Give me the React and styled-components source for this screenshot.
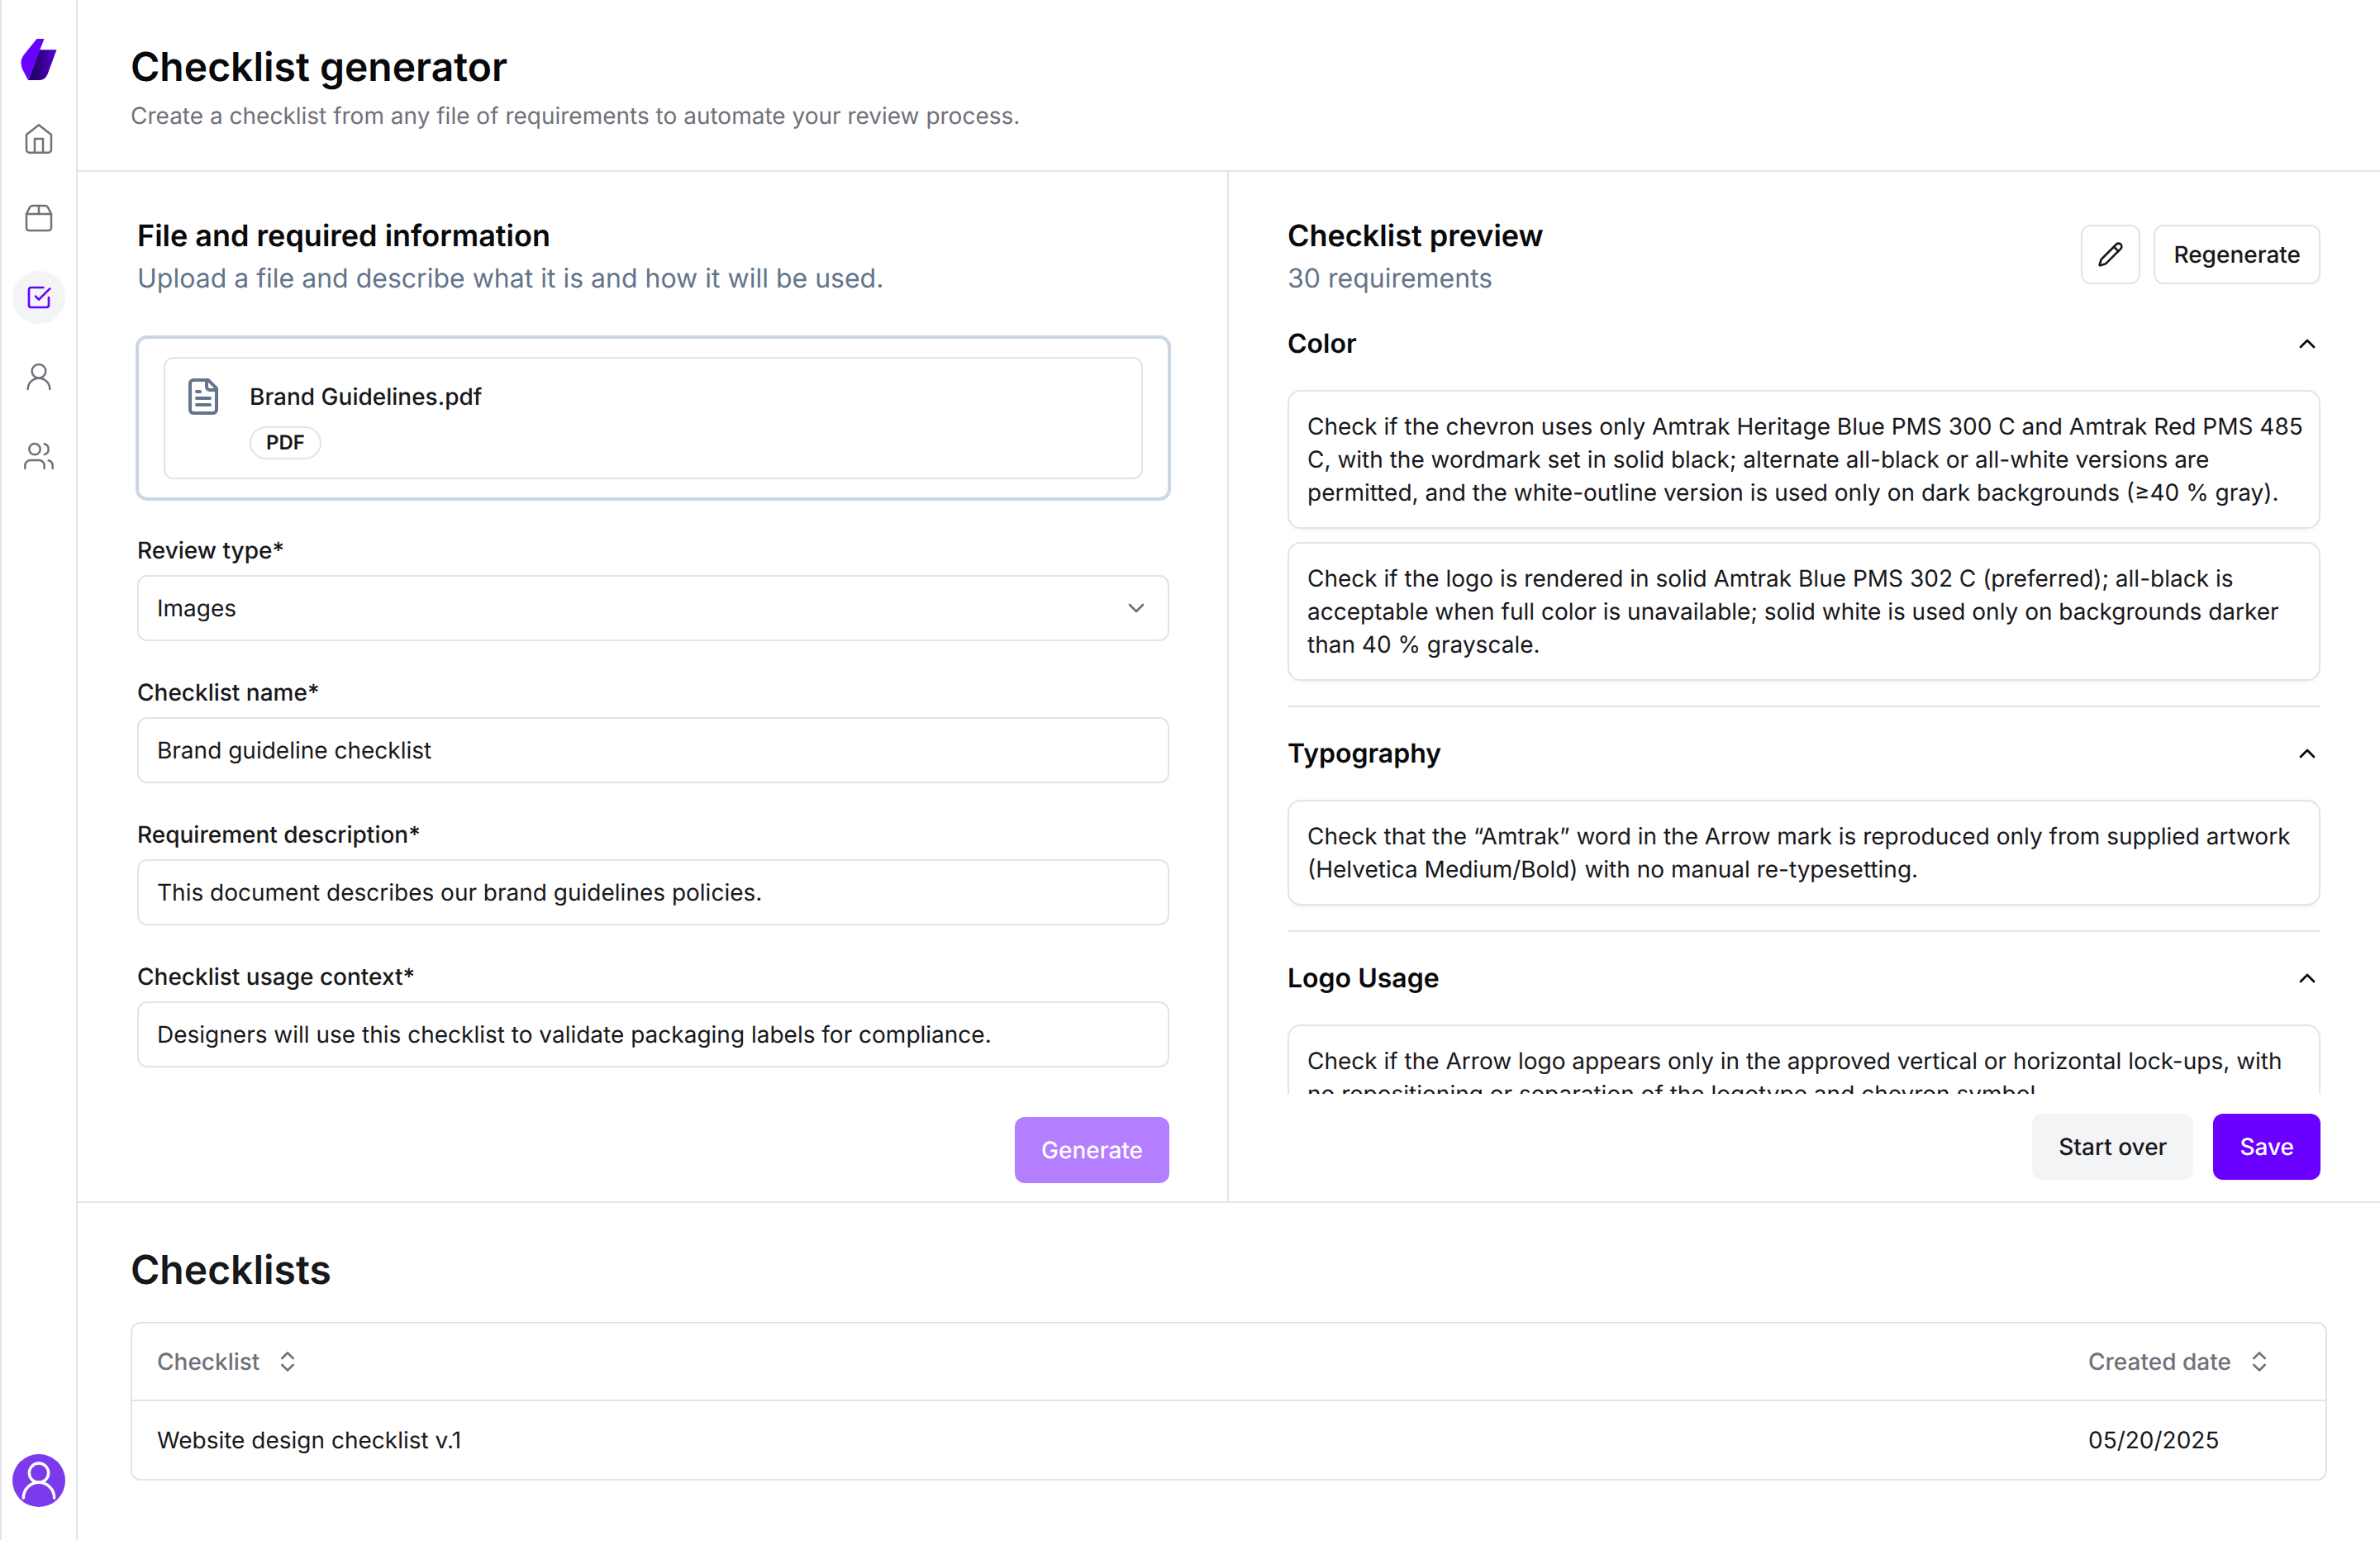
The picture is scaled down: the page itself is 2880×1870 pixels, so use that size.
import React, { useState } from 'react';
import styled, { createGlobalStyle, css } from 'styled-components';

const GlobalStyle = createGlobalStyle`
  *, *::before, *::after {
    box-sizing: border-box;
  }

  body {
    margin: 0;
    background: #ffffff;
    color: #18181b;
    font-family: Inter, 'Liberation Sans', sans-serif;
    font-size: 28px;
    line-height: 40px;
    text-rendering: geometricPrecision;
    -webkit-font-smoothing: antialiased;
  }

  button, input, select {
    font: inherit;
    color: inherit;
    text-rendering: inherit;
  }

  h1, h2, h3, p {
    margin: 0;
  }
`;

const Layout = styled.div`
  display: flex;
  min-height: calc(100vh - 6px);
`;

const Sidebar = styled.nav`
  flex: none;
  width: 94px;
  padding: 40px 0;
  display: flex;
  flex-direction: column;
  align-items: center;
  gap: 32px;
  border-left: 2px solid #e4e4e7;
  border-right: 2px solid #e4e4e7;
`;

const SidebarLink = styled.a`
  width: 64px;
  height: 64px;
  display: flex;
  align-items: center;
  justify-content: center;
  border-radius: 50%;
  color: ${({ $active }) => ($active ? '#6a00ff' : '#71717a')};
  background: ${({ $active }) => ($active ? '#f3f4f6' : 'transparent')};
`;

const Avatar = styled.button`
  width: 64px;
  height: 64px;
  margin-top: auto;
  padding: 0;
  display: flex;
  align-items: center;
  justify-content: center;
  border: none;
  border-radius: 50%;
  background: #7c3aed;
  color: #ffffff;
  cursor: pointer;
`;

const Main = styled.main`
  flex: 1;
  min-width: 0;
`;

const PageHeader = styled.header`
  padding: 48px 64px 46px;
  display: flex;
  flex-direction: column;
  gap: 6px;
  border-bottom: 2px solid #e4e4e7;
`;

const PageTitle = styled.h1`
  font-size: 48px;
  line-height: 66px;
  font-weight: 600;
  color: #09090b;
`;

const PageSubtitle = styled.p`
  color: #71717a;
`;

const Panes = styled.div`
  display: grid;
  grid-template-columns: 1fr 1fr;
  border-bottom: 2px solid #e4e4e7;
`;

const FormPane = styled.form`
  min-width: 0;
  padding: 49px 70px 22px 72px;
  border-right: 2px solid #e4e4e7;
`;

const PreviewPane = styled.section`
  min-width: 0;
  padding: 49px 72px 26px 71px;
  display: flex;
  flex-direction: column;
`;

const PaneHeader = styled.div`
  height: 103px;
  display: flex;
  align-items: flex-start;
  justify-content: space-between;
`;

const PaneTitle = styled.h2`
  font-size: 36px;
  line-height: 56px;
  font-weight: 600;
  color: #09090b;
`;

const PaneSubtitle = styled.p`
  font-size: 32px;
  line-height: 48px;
  color: #64748b;
`;

const DropZone = styled.div`
  margin: 47px 0 40px;
  padding: 22px 30px;
  border: 2px solid #cbd5e1;
  border-radius: 12px;
  box-shadow: 0 0 0 2px #cbd5e1;
`;

const FileCard = styled.div`
  padding: 22px;
  display: flex;
  gap: 32px;
  border: 2px solid #e4e4e7;
  border-radius: 12px;

  > svg {
    color: #64748b;
  }
`;

const FileInfo = styled.div`
  display: flex;
  flex-direction: column;
  align-items: flex-start;
  gap: 12px;
`;

const FileName = styled.span`
  line-height: 48px;
  font-weight: 500;
`;

const Badge = styled.span`
  padding: 0 18px;
  border: 2px solid #e4e4e7;
  border-radius: 20px;
  font-size: 24px;
  line-height: 36px;
  font-weight: 600;
`;

const Fields = styled.div`
  display: flex;
  flex-direction: column;
  gap: 40px;
`;

const Field = styled.div`
  display: flex;
  flex-direction: column;
  gap: 8px;
`;

const Label = styled.label`
  line-height: 44px;
  font-weight: 500;
`;

const control = css`
  width: 100%;
  height: 80px;
  padding: 0 22px;
  border: 2px solid #e4e4e7;
  border-radius: 12px;
  background: #ffffff;
  outline-color: #6a00ff;
`;

const Input = styled.input`
  ${control}
`;

const SelectWrapper = styled.div`
  position: relative;

  svg {
    position: absolute;
    top: 24px;
    right: 24px;
    color: #71717a;
    pointer-events: none;
  }
`;

const Select = styled.select`
  ${control}
  appearance: none;
`;

const Actions = styled.div`
  margin-top: ${({ $top }) => $top}px;
  display: flex;
  justify-content: flex-end;
  gap: 24px;
`;

const variants = {
  primary: css`
    background: #6a00ff;
    color: #ffffff;
  `,
  secondary: css`
    background: #f3f4f6;
  `,
};

const Button = styled.button`
  height: 80px;
  padding: 0 32px;
  border: none;
  border-radius: 12px;
  font-weight: 500;
  cursor: pointer;
  ${({ $variant }) => variants[$variant]}

  &:disabled {
    opacity: 0.5;
    cursor: default;
  }
`;

const Toolbar = styled.div`
  padding-top: 15px;
  display: flex;
  gap: 16px;
`;

const OutlineButton = styled.button`
  height: 72px;
  padding: 0 ${({ $icon }) => ($icon ? 18 : 22)}px;
  display: flex;
  align-items: center;
  border: 2px solid #e4e4e7;
  border-radius: 12px;
  background: #ffffff;
  font-weight: 500;
  cursor: pointer;
`;

const ScrollArea = styled.div`
  flex: 1 1 0px;
  min-height: 0;
  overflow-y: auto;
  scrollbar-width: none;
`;

const Group = styled.section`
  padding-bottom: 30px;
  border-bottom: 2px solid #e4e4e7;
`;

const GroupTrigger = styled.button`
  width: 100%;
  height: 112px;
  padding: 0;
  display: flex;
  align-items: center;
  justify-content: space-between;
  border: none;
  background: none;
  font-size: 32px;
  font-weight: 600;
  color: #09090b;
  cursor: pointer;
`;

const RequirementList = styled.div`
  display: flex;
  flex-direction: column;
  gap: 16px;
`;

const Requirement = styled.p`
  padding: 22px 16px 22px 22px;
  border: 2px solid #e4e4e7;
  border-radius: 16px;
  box-shadow: 0 2px 4px rgba(0, 0, 0, 0.05);
`;

const ChecklistsSection = styled.section`
  padding: 48px 64px 72px;
`;

const SectionTitle = styled.h2`
  margin-bottom: 30px;
  font-size: 48px;
  line-height: 66px;
  font-weight: 600;
`;

const TableFrame = styled.div`
  border: 2px solid #e4e4e7;
  border-radius: 12px;
`;

const Table = styled.table`
  width: 100%;
  border-collapse: separate;
  border-spacing: 0;
  text-align: left;

  th, td {
    height: 94px;
    padding: 0 30px;
  }

  th {
    border-bottom: 2px solid #e4e4e7;
  }

  th:last-child {
    width: 317px;
  }
`;

const SortButton = styled.button`
  padding: 0;
  display: flex;
  align-items: center;
  gap: 18px;
  border: none;
  background: none;
  font-weight: 500;
  color: #71717a;
  cursor: pointer;
`;

const Icon = ({ size = 32, stroke = 2, children }) => (
  <svg
    width={size}
    height={size}
    viewBox="0 0 24 24"
    fill="none"
    stroke="currentColor"
    strokeWidth={stroke}
    strokeLinecap="round"
    strokeLinejoin="round"
    aria-hidden="true"
  >
    {children}
  </svg>
);

const HomeIcon = () => (
  <Icon size={40} stroke={1.5}>
    <path d="m3 9 9-7 9 7v11a2 2 0 0 1-2 2H5a2 2 0 0 1-2-2z" />
    <path d="M9 22V12h6v10" />
  </Icon>
);

const PackageIcon = () => (
  <Icon size={40} stroke={1.5}>
    <path d="M3 9h18v10a2 2 0 0 1-2 2H5a2 2 0 0 1-2-2V9Z" />
    <path d="m3 9 2.45-4.9A2 2 0 0 1 7.24 3h9.52a2 2 0 0 1 1.8 1.1L21 9" />
    <path d="M12 3v6" />
  </Icon>
);

const CheckIcon = () => (
  <Icon>
    <path d="m9 11 3 3L22 4" />
    <path d="M21 12v7a2 2 0 0 1-2 2H5a2 2 0 0 1-2-2V5a2 2 0 0 1 2-2h11" />
  </Icon>
);

const UserIcon = ({ size = 40 }) => (
  <Icon size={size} stroke={1.5}>
    <circle cx="12" cy="8" r="5" />
    <path d="M20 21a8 8 0 0 0-16 0" />
  </Icon>
);

const UsersIcon = () => (
  <Icon size={40} stroke={1.5}>
    <path d="M16 21v-2a4 4 0 0 0-4-4H6a4 4 0 0 0-4 4v2" />
    <circle cx="9" cy="7" r="4" />
    <path d="M22 21v-2a4 4 0 0 0-3-3.87" />
    <path d="M16 3.13a4 4 0 0 1 0 7.75" />
  </Icon>
);

const FileIcon = () => (
  <Icon size={48}>
    <path d="M15 2H6a2 2 0 0 0-2 2v16a2 2 0 0 0 2 2h12a2 2 0 0 0 2-2V7Z" />
    <path d="M14 2v4a2 2 0 0 0 2 2h4" />
    <path d="M10 9H8" />
    <path d="M16 13H8" />
    <path d="M16 17H8" />
  </Icon>
);

const PencilIcon = () => (
  <Icon>
    <path d="M21.174 6.812a1 1 0 0 0-3.986-3.987L3.842 16.174a2 2 0 0 0-.5.83l-1.321 4.352a.5.5 0 0 0 .623.622l4.353-1.32a2 2 0 0 0 .83-.497z" />
    <path d="m15 5 4 4" />
  </Icon>
);

const ChevronIcon = ({ up }) => (
  <Icon>
    <path d={up ? 'm18 15-6-6-6 6' : 'm6 9 6 6 6-6'} />
  </Icon>
);

const SortIcon = () => (
  <Icon>
    <path d="m7 15 5 5 5-5" />
    <path d="m7 9 5-5 5 5" />
  </Icon>
);

const Logo = () => (
  <svg width="44" height="50" viewBox="0 0 44 50" aria-hidden="true">
    <defs>
      <linearGradient id="logo-shade" x1="10" y1="0" x2="44" y2="0" gradientUnits="userSpaceOnUse">
        <stop offset="0.2" stopColor="#23006b" />
        <stop offset="1" stopColor="#5a00d8" />
      </linearGradient>
    </defs>
    <path d="M23 13.300h20.500L32.500 43Q29.500 50 23 50H9Z" fill="url(#logo-shade)" />
    <path d="M19.500 0H28.500L9 50L2 36.500Q-1.500 27.500 3 20.500Z" fill="#6a00ff" />
  </svg>
);

const navItems = [
  { name: 'Home', icon: HomeIcon },
  { name: 'Projects', icon: PackageIcon },
  { name: 'Checklists', icon: CheckIcon, active: true },
  { name: 'Profile', icon: UserIcon },
  { name: 'Team', icon: UsersIcon },
];

const textFields = [
  { id: 'name', label: 'Checklist name*', value: 'Brand guideline checklist' },
  {
    id: 'description',
    label: 'Requirement description*',
    value: 'This document describes our brand guidelines policies.',
  },
  {
    id: 'context',
    label: 'Checklist usage context*',
    value: 'Designers will use this checklist to validate packaging labels for compliance.',
  },
];

const groups = [
  {
    title: 'Color',
    requirements: [
      'Check if the chevron uses only Amtrak Heritage Blue PMS 300 C and Amtrak Red PMS 485 C, with the wordmark set in solid black; alternate all-black or all-white versions are permitted, and the white-outline version is used only on dark backgrounds (≥40 % gray).',
      'Check if the logo is rendered in solid Amtrak Blue PMS 302 C (preferred); all-black is acceptable when full color is unavailable; solid white is used only on backgrounds darker than 40 % grayscale.',
    ],
  },
  {
    title: 'Typography',
    requirements: [
      'Check that the “Amtrak” word in the Arrow mark is reproduced only from supplied artwork (Helvetica Medium/Bold) with no manual re-typesetting.',
    ],
  },
  {
    title: 'Logo Usage',
    requirements: [
      'Check if the Arrow logo appears only in the approved vertical or horizontal lock-ups, with no repositioning or separation of the logotype and chevron symbol.',
    ],
  },
];

const checklists = [{ name: 'Website design checklist v.1', created: '05/20/2025' }];

const RequirementGroup = ({ title, requirements }) => {
  const [open, setOpen] = useState(true);

  return (
    <Group>
      <GroupTrigger type="button" aria-expanded={open} onClick={() => setOpen(!open)}>
        {title}
        <ChevronIcon up={open} />
      </GroupTrigger>
      {open && (
        <RequirementList>
          {requirements.map((text) => (
            <Requirement key={text}>{text}</Requirement>
          ))}
        </RequirementList>
      )}
    </Group>
  );
};

const GeneratorForm = () => (
  <FormPane onSubmit={(e) => e.preventDefault()}>
    <PaneTitle>File and required information</PaneTitle>
    <PaneSubtitle>Upload a file and describe what it is and how it will be used.</PaneSubtitle>
    <DropZone>
      <FileCard>
        <FileIcon />
        <FileInfo>
          <FileName>Brand Guidelines.pdf</FileName>
          <Badge>PDF</Badge>
        </FileInfo>
      </FileCard>
    </DropZone>
    <Fields>
      <Field>
        <Label htmlFor="type">Review type*</Label>
        <SelectWrapper>
          <Select id="type" defaultValue="images">
            <option value="images">Images</option>
            <option value="documents">Documents</option>
          </Select>
          <ChevronIcon />
        </SelectWrapper>
      </Field>
      {textFields.map((field) => (
        <Field key={field.id}>
          <Label htmlFor={field.id}>{field.label}</Label>
          <Input id={field.id} type="text" defaultValue={field.value} />
        </Field>
      ))}
    </Fields>
    <Actions $top={60}>
      <Button type="submit" $variant="primary" disabled>
        Generate
      </Button>
    </Actions>
  </FormPane>
);

const Preview = () => (
  <PreviewPane>
    <PaneHeader>
      <div>
        <PaneTitle>Checklist preview</PaneTitle>
        <PaneSubtitle>30 requirements</PaneSubtitle>
      </div>
      <Toolbar>
        <OutlineButton type="button" $icon aria-label="Edit">
          <PencilIcon />
        </OutlineButton>
        <OutlineButton type="button">Regenerate</OutlineButton>
      </Toolbar>
    </PaneHeader>
    <ScrollArea>
      {groups.map((group) => (
        <RequirementGroup key={group.title} {...group} />
      ))}
    </ScrollArea>
    <Actions $top={24}>
      <Button type="button" $variant="secondary">
        Start over
      </Button>
      <Button type="button" $variant="primary">
        Save
      </Button>
    </Actions>
  </PreviewPane>
);

const App = () => (
  <>
    <GlobalStyle />
    <Layout>
      <Sidebar>
        <SidebarLink href="#" aria-label="Start">
          <Logo />
        </SidebarLink>
        {navItems.map(({ name, icon: NavIcon, active }) => (
          <SidebarLink key={name} href={`#${name.toLowerCase()}`} aria-label={name} $active={active}>
            <NavIcon />
          </SidebarLink>
        ))}
        <Avatar type="button" aria-label="Account">
          <UserIcon size={56} />
        </Avatar>
      </Sidebar>
      <Main>
        <PageHeader>
          <PageTitle>Checklist generator</PageTitle>
          <PageSubtitle>
            Create a checklist from any file of requirements to automate your review process.
          </PageSubtitle>
        </PageHeader>
        <Panes>
          <GeneratorForm />
          <Preview />
        </Panes>
        <ChecklistsSection>
          <SectionTitle>Checklists</SectionTitle>
          <TableFrame>
            <Table>
              <thead>
                <tr>
                  <th scope="col">
                    <SortButton type="button">
                      Checklist
                      <SortIcon />
                    </SortButton>
                  </th>
                  <th scope="col">
                    <SortButton type="button">
                      Created date
                      <SortIcon />
                    </SortButton>
                  </th>
                </tr>
              </thead>
              <tbody>
                {checklists.map((item) => (
                  <tr key={item.name}>
                    <td>{item.name}</td>
                    <td>{item.created}</td>
                  </tr>
                ))}
              </tbody>
            </Table>
          </TableFrame>
        </ChecklistsSection>
      </Main>
    </Layout>
  </>
);

export default App;
